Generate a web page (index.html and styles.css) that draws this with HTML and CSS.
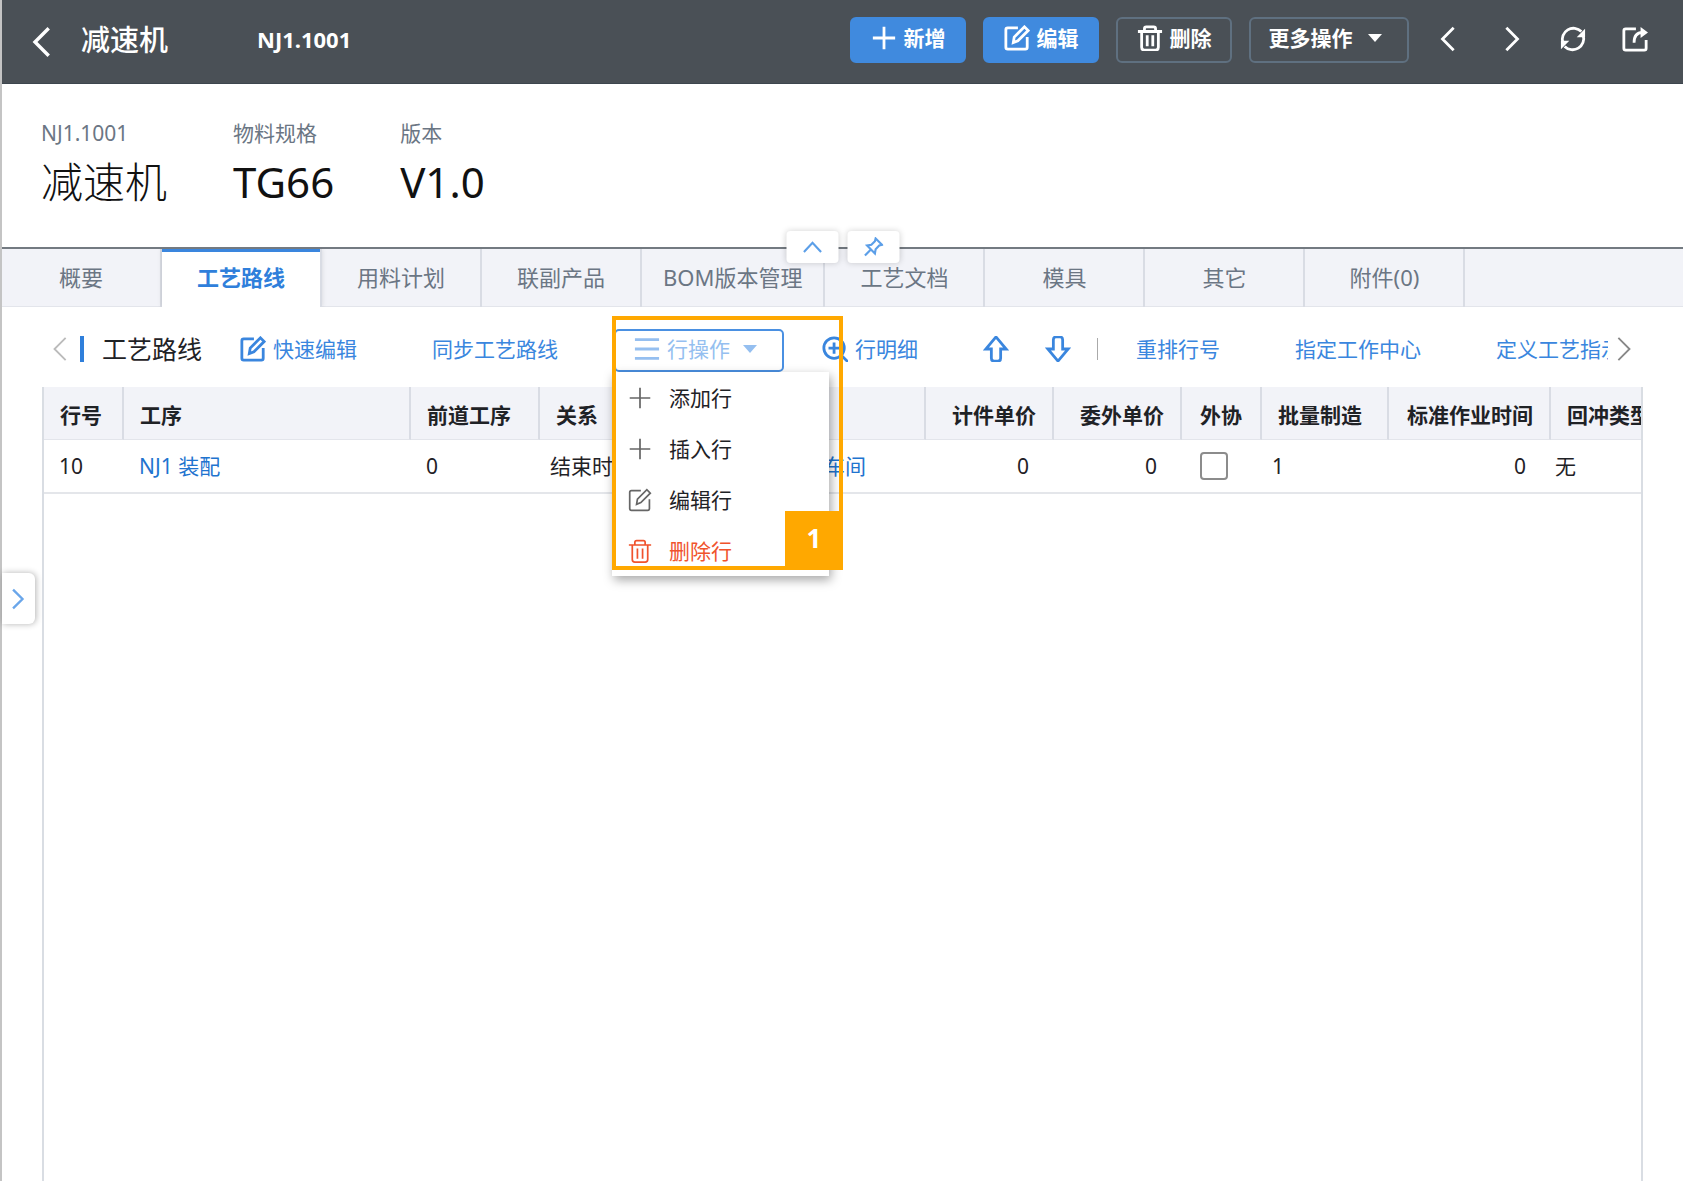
FILE: index.html
```
<!DOCTYPE html>
<html lang="zh-CN">
<head>
    <meta charset="UTF-8">
    <meta name="viewport" content="width=device-width, initial-scale=1.0">
    <title>减速机 NJ1.1001</title>
    <link rel="stylesheet" href="styles.css">
</head>
<body>

    <!-- 图标 -->
    <svg class="sprite" aria-hidden="true">
        <symbol id="i-left" viewBox="0 0 28 28"><path d="M19 2 7 14l12 12"/></symbol>
        <symbol id="i-right" viewBox="0 0 28 28"><path d="M9 2l12 12L9 26"/></symbol>
        <symbol id="i-up" viewBox="0 0 28 28"><path d="M2 21 14 8l12 13"/></symbol>
        <symbol id="i-plus" viewBox="0 0 28 28"><path d="M14 2v24M2 14h24"/></symbol>
        <symbol id="i-edit" viewBox="0 0 28 28"><path d="M15 3H4Q2 3 2 5v19q0 2 2 2h19q2 0 2-2V13M10 19l1-6L22 2l4 4-11 11z"/></symbol>
        <symbol id="i-trash" viewBox="0 0 28 28"><path d="M1 7h26M8 7V4q0-2 2-2h8q2 0 2 2v3M5 7v17q0 3 3 3h12q3 0 3-3V7M11 11v12M17 11v12"/></symbol>
        <symbol id="i-refresh" viewBox="0 0 28 28"><path d="M3 18A12 12 0 0 1 23 6M25 10A12 12 0 0 1 5 22"/><path class="solid" d="M27 3v9h-9zM1 25v-9h9z"/></symbol>
        <symbol id="i-share" viewBox="0 0 28 28"><path d="M15 3H4Q2 3 2 5v19q0 2 2 2h20q2 0 2-2v-9M13 18q0-11 9-11"/><path class="solid" d="M20 1l8 6-8 6z"/></symbol>
        <symbol id="i-menu" viewBox="0 0 28 28"><path d="M1 4h26M1 14h26M1 24h26"/></symbol>
        <symbol id="i-zoom" viewBox="0 0 28 28"><circle cx="13" cy="13" r="11"/><path d="M21 21l7 7M13 7v12M7 13h12"/></symbol>
        <symbol id="i-arrow-up" viewBox="0 0 28 28"><path d="M14 1 3 14h6v10q0 3 3 3h4q3 0 3-3V14h6z"/></symbol>
        <symbol id="i-arrow-down" viewBox="0 0 28 28"><path d="M14 27 3 14h6V4q0-3 3-3h4q3 0 3 3v10h6z"/></symbol>
        <symbol id="i-pin" viewBox="0 0 28 28"><path d="M17 2l9 9-4 1-5 5-1 6L5 12l6-1 5-5zM10 18l-8 8"/></symbol>
        <symbol id="i-caret" viewBox="0 0 14 8"><path class="solid" d="M0 0h14L7 8z"/></symbol>
    </svg>

    <header class="topbar">
        <button class="back" aria-label="返回"><svg class="icon icon-lg"><use href="#i-left"/></svg></button>
        <h1 class="topbar-title">减速机</h1>
        <span class="topbar-code">NJ1.1001</span>
        <div class="actions">
            <button class="btn btn-primary"><svg class="icon"><use href="#i-plus"/></svg>新增</button>
            <button class="btn btn-primary"><svg class="icon"><use href="#i-edit"/></svg>编辑</button>
            <button class="btn"><svg class="icon"><use href="#i-trash"/></svg>删除</button>
            <button class="btn btn-more">更多操作<svg class="caret"><use href="#i-caret"/></svg></button>
        </div>
        <div class="tools">
            <button class="tool" aria-label="上一条"><svg class="icon"><use href="#i-left"/></svg></button>
            <button class="tool" aria-label="下一条"><svg class="icon"><use href="#i-right"/></svg></button>
            <button class="tool" aria-label="刷新"><svg class="icon"><use href="#i-refresh"/></svg></button>
            <button class="tool" aria-label="打开"><svg class="icon"><use href="#i-share"/></svg></button>
        </div>
    </header>

    <section class="summary">
        <dl class="fact fact-name"><dt>NJ1.1001</dt><dd>减速机</dd></dl>
        <dl class="fact"><dt>物料规格</dt><dd>TG66</dd></dl>
        <dl class="fact"><dt>版本</dt><dd>V1.0</dd></dl>
        <div class="fold">
            <button class="fold-btn" aria-label="收起"><svg><use href="#i-up"/></svg></button>
            <button class="fold-btn" aria-label="固定"><svg><use href="#i-pin"/></svg></button>
        </div>
    </section>

    <nav class="tabs">
        <a class="tab" href="#">概要</a>
        <a class="tab active" href="#">工艺路线</a>
        <a class="tab" href="#">用料计划</a>
        <a class="tab" href="#">联副产品</a>
        <a class="tab" href="#">BOM版本管理</a>
        <a class="tab" href="#">工艺文档</a>
        <a class="tab" href="#">模具</a>
        <a class="tab" href="#">其它</a>
        <a class="tab" href="#">附件(0)</a>
    </nav>

    <main class="content">
        <div class="toolbar">
            <div class="heading">
                <button class="scroll scroll-off" aria-label="向左"><svg class="icon"><use href="#i-left"/></svg></button>
                <h2>工艺路线</h2>
            </div>
            <button class="link"><svg class="icon"><use href="#i-edit"/></svg>快速编辑</button>
            <button class="link link-text">同步工艺路线</button>

            <div class="dropdown">
                <button class="dropdown-btn" aria-expanded="true"><svg class="icon"><use href="#i-menu"/></svg>行操作<svg class="caret"><use href="#i-caret"/></svg></button>
                <div class="menu">
                    <button class="menu-item"><svg class="icon"><use href="#i-plus"/></svg>添加行</button>
                    <button class="menu-item"><svg class="icon"><use href="#i-plus"/></svg>插入行</button>
                    <button class="menu-item"><svg class="icon"><use href="#i-edit"/></svg>编辑行</button>
                    <button class="menu-item danger"><svg class="icon"><use href="#i-trash"/></svg>删除行</button>
                </div>
                <div class="callout"><span class="callout-no">1</span></div>
            </div>

            <button class="link"><svg class="icon"><use href="#i-zoom"/></svg>行明细</button>
            <div class="move">
                <button class="link" aria-label="上移"><svg class="icon"><use href="#i-arrow-up"/></svg></button>
                <button class="link" aria-label="下移"><svg class="icon"><use href="#i-arrow-down"/></svg></button>
                <span class="divider"></span>
            </div>
            <button class="link">重排行号</button>
            <button class="link link-text">指定工作中心</button>
            <button class="link link-text link-cut">定义工艺指示</button>
            <button class="scroll" aria-label="向右"><svg class="icon"><use href="#i-right"/></svg></button>
        </div>

        <div class="grid">
            <table>
                <colgroup>
                    <col class="c-no"><col class="c-process"><col class="c-prev"><col class="c-rel"><col class="c-center">
                    <col class="c-price"><col class="c-price"><col class="c-check"><col class="c-batch"><col class="c-time"><col>
                </colgroup>
                <thead>
                    <tr>
                        <th>行号</th>
                        <th>工序</th>
                        <th>前道工序</th>
                        <th>关系</th>
                        <th></th>
                        <th class="num">计件单价</th>
                        <th class="num">委外单价</th>
                        <th class="mid">外协</th>
                        <th>批量制造</th>
                        <th class="num">标准作业时间</th>
                        <th>回冲类型</th>
                    </tr>
                </thead>
                <tbody>
                    <tr>
                        <td class="first">10</td>
                        <td class="first"><a href="#">NJ1 装配</a></td>
                        <td class="first">0</td>
                        <td>结束时</td>
                        <td class="shop"><a href="#">车间</a></td>
                        <td class="num">0</td>
                        <td class="num">0</td>
                        <td class="mid"><input type="checkbox" aria-label="外协"></td>
                        <td>1</td>
                        <td class="num">0</td>
                        <td class="last">无</td>
                    </tr>
                </tbody>
            </table>
        </div>
    </main>

    <button class="drawer" aria-label="展开"><svg class="icon"><use href="#i-right"/></svg></button>

</body>
</html>
```

FILE: styles.css
```
* {
    box-sizing: border-box;
}

body {
    margin: 0;
    min-height: 100vh;
    display: flex;
    flex-direction: column;
    border-left: 2px solid #c4c4c4;
    background: #fff;
    color: #1f2226;
    font-family: "Noto Sans", "Noto Sans CJK SC", sans-serif;
    font-size: 21px;
    line-height: 28px;
    overflow-x: hidden;
}

button {
    border: 0;
    padding: 0;
    background: none;
    color: inherit;
    font: inherit;
    white-space: nowrap;
    cursor: pointer;
}

a {
    color: #1f74cf;
    text-decoration: none;
}

/* 图标 */
.sprite {
    position: absolute;
    width: 0;
    height: 0;
}

svg {
    fill: none;
    stroke: currentColor;
    stroke-width: 3;
    flex: none;
}

.solid {
    fill: currentColor;
    stroke: none;
}

.icon {
    display: block;
    width: 26px;
    height: 26px;
}

.icon-lg {
    width: 32px;
    height: 32px;
}

.caret {
    width: 14px;
    height: 8px;
}

/* 顶部栏 */
.topbar {
    display: flex;
    align-items: center;
    height: 84px;
    padding: 0 17px 4px 25px;
    background: #4a5056;
    border-bottom: 1px solid #3d464e;
    color: #fff;
}

.back {
    margin-top: 4px;
}

.topbar-title {
    margin: 0 0 0 22px;
    font-size: 29px;
    font-weight: 500;
}

.topbar-code {
    margin-left: 89px;
    padding-bottom: 2px;
    font-size: 22px;
    font-weight: 700;
}

.actions {
    display: flex;
    gap: 17px;
    margin-left: auto;
}

.btn {
    display: flex;
    align-items: center;
    justify-content: center;
    gap: 7px;
    width: 116px;
    height: 46px;
    border: 2px solid #5f7080;
    border-radius: 6px;
    padding-bottom: 4px;
    font-weight: 700;
}

.btn-primary {
    background: #408ade;
    border-color: #408ade;
}

.btn-more {
    width: 160px;
    gap: 15px;
    padding-right: 8px;
}

.tools {
    display: flex;
    margin-left: 9px;
    margin-bottom: 2px;
}

.tool {
    display: flex;
    justify-content: center;
    width: 62px;
}

/* 物料信息 */
.summary {
    position: relative;
    display: flex;
    gap: 66px;
    height: 165px;
    padding: 35px 39px 0;
    border-bottom: 2px solid #737a81;
}

.fact {
    margin: 0;
}

.fact dt {
    color: #6b7684;
}

.fact dd {
    margin: 7px 0 0;
    font-size: 42px;
    line-height: 56px;
    color: #111;
}

.fact-name dd {
    font-weight: 300;
}

.fold {
    position: absolute;
    left: 50%;
    bottom: -16px;
    z-index: 2;
    display: flex;
    gap: 9px;
    transform: translateX(-50%);
}

.fold-btn {
    display: flex;
    align-items: center;
    justify-content: center;
    width: 52px;
    height: 32px;
    border-radius: 4px;
    background: #fff;
    box-shadow: 0 0 6px rgba(0, 0, 0, 0.18);
    color: #5c9fe8;
}

.fold-btn svg {
    width: 20px;
    height: 20px;
    stroke-width: 3;
}

/* 页签 */
.tabs {
    display: flex;
    height: 58px;
    background: #f2f3f8;
    border-bottom: 1px solid #e3e5eb;
}

.tab {
    min-width: 160px;
    height: 58px;
    padding: 0 21px;
    border-right: 2px solid #d9dce4;
    color: #6b7684;
    font-size: 22px;
    line-height: 56px;
    text-align: center;
    white-space: nowrap;
}

.tab.active {
    background: #fff;
    box-shadow: inset 0 3px #3a86de, 0 0 5px rgba(0, 0, 0, 0.12);
    clip-path: inset(0 -6px 0 -6px);
    color: #2f7fdb;
    font-weight: 700;
}

/* 工具条 */
.content {
    flex: 1;
    display: flex;
    flex-direction: column;
}

.toolbar {
    display: flex;
    align-items: center;
    gap: 38px;
    height: 80px;
    padding: 4px 47px 0 46px;
}

.heading {
    display: flex;
    align-items: center;
    gap: 6px;
}

.heading h2 {
    margin: 0;
    padding-left: 18px;
    border-left: 4px solid #2f7fdb;
    font-size: 25px;
    font-weight: 400;
    line-height: 26px;
    white-space: nowrap;
}

.scroll {
    color: #888;
}

.scroll svg {
    stroke-width: 2;
}

.scroll-off {
    color: #bbb;
}

.link {
    display: flex;
    align-items: center;
    gap: 7px;
    color: #3a86de;
}

.link-text {
    margin-left: 37px;
}

.link-cut {
    flex: 1;
    min-width: 0;
    margin-right: -36px;
    overflow: hidden;
}

.dropdown {
    position: relative;
    margin-left: 18px;
    padding-top: 3px;
}

.dropdown-btn {
    display: flex;
    align-items: center;
    gap: 7px;
    width: 170px;
    height: 43px;
    padding: 0 16px 4px 18px;
    border: 2px solid #4a90e2;
    border-radius: 5px;
    color: #95bff0;
}

.dropdown-btn .caret {
    margin-left: 6px;
}

.menu {
    position: absolute;
    top: 46px;
    left: -2px;
    z-index: 3;
    width: 217px;
    background: #fff;
    box-shadow: 2px 4px 10px rgba(0, 0, 0, 0.35);
}

.menu-item {
    display: flex;
    align-items: center;
    gap: 17px;
    width: 100%;
    height: 51px;
    padding-left: 16px;
}

.menu-item svg {
    width: 24px;
    height: 24px;
    stroke-width: 2;
    color: #666;
}

.menu-item.danger,
.menu-item.danger svg {
    color: #f0532d;
}

.callout {
    position: absolute;
    top: -10px;
    left: -2px;
    z-index: 4;
    width: 231px;
    height: 254px;
    border: 4px solid #ffa800;
    pointer-events: none;
}

.callout-no {
    position: absolute;
    right: -4px;
    bottom: -4px;
    width: 58px;
    height: 59px;
    background: #ffa800;
    color: #fff;
    font-size: 26px;
    font-weight: 700;
    line-height: 54px;
    text-align: center;
}

.move {
    display: flex;
    align-items: center;
    gap: 36px;
    margin-left: 27px;
}

.divider {
    width: 1px;
    height: 22px;
    margin-left: -10px;
    background: #aaa;
}

/* 表格 */
.grid {
    flex: 1;
    margin: 0 40px 0 40px;
    border: solid #d9dde3;
    border-width: 0 2px;
    overflow: hidden;
}

table {
    width: 100%;
    table-layout: fixed;
    border-collapse: separate;
    border-spacing: 0;
}

.c-no { width: 80px; }
.c-process { width: 287px; }
.c-prev { width: 129px; }
.c-rel { width: 121px; }
.c-center { width: 265px; }
.c-price { width: 128px; }
.c-check { width: 80px; }
.c-batch { width: 127px; }
.c-time { width: 162px; }

th,
td {
    padding: 0 0 0 16px;
    text-align: left;
    white-space: nowrap;
    overflow: hidden;
}

th {
    height: 53px;
    padding-top: 4px;
    background: #f2f3f8;
    border-right: 2px solid #d9dce4;
    border-bottom: 1px solid #e3e5eb;
    font-weight: 700;
}

th:last-child {
    border-right: 0;
}

td {
    height: 54px;
    padding-left: 10px;
    border-bottom: 2px solid #e4e6ea;
}

td.first {
    padding-left: 15px;
}

td.last {
    padding-left: 4px;
}

th.num {
    padding-right: 16px;
    text-align: right;
}

td.num {
    padding-right: 25px;
    text-align: right;
}

th.mid,
td.mid {
    padding-left: 0;
    text-align: center;
}

td.shop {
    padding-left: 163px;
}

input[type="checkbox"] {
    appearance: none;
    display: block;
    width: 28px;
    height: 28px;
    margin: 0 0 0 18px;
    border: 2px solid #8c8c8c;
    border-radius: 4px;
    background: #fff;
}

/* 左侧展开按钮 */
.drawer {
    position: absolute;
    top: 573px;
    left: 2px;
    width: 33px;
    height: 51px;
    border-radius: 0 6px 6px 0;
    background: #fff;
    box-shadow: 1px 0 6px rgba(0, 0, 0, 0.3);
    color: #6aa6ea;
}

.drawer svg {
    width: 22px;
    height: 22px;
    margin-left: 4px;
    stroke-width: 3;
}
```
